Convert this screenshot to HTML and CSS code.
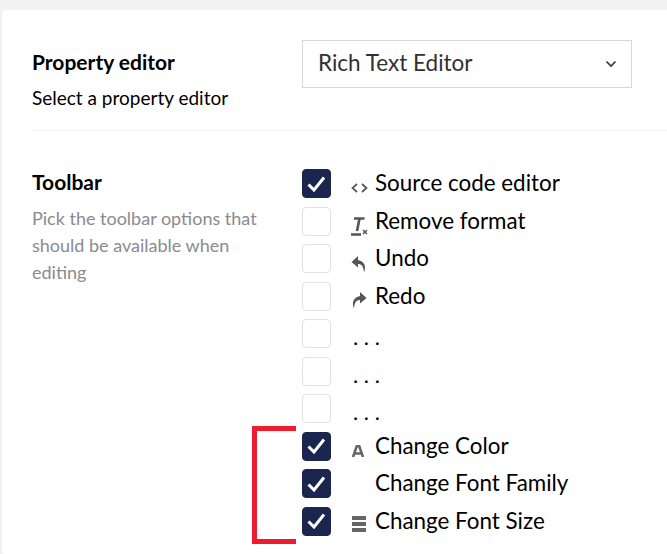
FILE: index.html
```html
<!DOCTYPE html>
<html lang="en">
<head>
  <meta charset="UTF-8">
  <title>Property editor</title>
  <link rel="stylesheet" href="styles.css">
</head>
<body>
  <div class="card">
    <div class="field field-editor">
      <div class="field-label">
        <h3>Property editor</h3>
        <p class="hint-dark">Select a property editor</p>
      </div>
      <div class="select">
        <span class="select-value">Rich Text Editor</span>
        <svg width="12" height="8" viewBox="0 0 12 8"><path d="M1.5 1.5 6 6l4.500-4.500" fill="none" stroke="#333" stroke-width="1.600"/></svg>
      </div>
    </div>

    <div class="field field-toolbar">
      <div class="field-label">
        <h3>Toolbar</h3>
        <p class="hint">Pick the toolbar options that should be available when editing</p>
      </div>
      <ul class="options">
        <li>
          <span class="box checked"><svg width="19" height="16" viewBox="0 0 19 16"><path d="M1.500 8.500 7 14 17 1.500" fill="none" stroke="#fff" stroke-width="3"/></svg></span>
          <span class="icon lifted"><svg width="17" height="12" viewBox="0 0 17 12"><path d="M6 2 1.500 6 6 10M11 2l4.500 4L11 10" fill="none" stroke="#555" stroke-width="1.700"/></svg></span>
          <span class="name">Source code editor</span>
        </li>
        <li>
          <span class="box"></span>
          <span class="icon"><svg width="18" height="19" viewBox="0 0 18 19"><path d="M3 1.500h10.500M8.500 1.500 6 14M0 17.500h10" fill="none" stroke="#555" stroke-width="2.600"/><path d="m12 13 4 4m0-4-4 4" stroke="#555" stroke-width="1.500"/></svg></span>
          <span class="name">Remove format</span>
        </li>
        <li>
          <span class="box"></span>
          <span class="icon"><svg width="16" height="18" viewBox="0 0 16 18"><path d="M7 1 0.500 7 7 12.500V9c3.500 0 5.500 2 6 8.500 2.500-6 .5-11-6-12.500z" fill="#555"/></svg></span>
          <span class="name">Undo</span>
        </li>
        <li>
          <span class="box"></span>
          <span class="icon lifted-sm"><svg width="16" height="18" viewBox="0 0 16 18"><path d="M9 1 15.500 7 9 12.500V9c-3.500 0-5.500 2-6 8.500-2.500-6-.5-11 6-12.500z" fill="#555"/></svg></span>
          <span class="name">Redo</span>
        </li>
        <li><span class="box"></span><span class="dots">. . .</span></li>
        <li><span class="box"></span><span class="dots">. . .</span></li>
        <li><span class="box"></span><span class="dots">. . .</span></li>
        <li>
          <span class="box checked"><svg width="19" height="16" viewBox="0 0 19 16"><path d="M1.500 8.500 7 14 17 1.500" fill="none" stroke="#fff" stroke-width="3"/></svg></span>
          <span class="icon lifted inset"><svg width="12" height="12" viewBox="0 0 12 12"><path d="M1 12 4.800 1h2.400L11 12M2.500 8.500h7" fill="none" stroke="#666" stroke-width="2.600"/></svg></span>
          <span class="name">Change Color</span>
        </li>
        <li>
          <span class="box checked"><svg width="19" height="16" viewBox="0 0 19 16"><path d="M1.500 8.500 7 14 17 1.500" fill="none" stroke="#fff" stroke-width="3"/></svg></span>
          <span class="icon"></span>
          <span class="name">Change Font Family</span>
        </li>
        <li>
          <span class="box checked"><svg width="19" height="16" viewBox="0 0 19 16"><path d="M1.500 8.500 7 14 17 1.500" fill="none" stroke="#fff" stroke-width="3"/></svg></span>
          <span class="icon lifted inset"><svg width="14" height="16" viewBox="0 0 14 16"><path d="M0 0h14v4H0zM0 6h14v4H0zM0 12h14v4H0z" fill="#666"/></svg></span>
          <span class="name">Change Font Size</span>
        </li>
      </ul>
    </div>
    <div class="bracket"></div>
  </div>
</body>
</html>
```

FILE: styles.css
```css
html, body {
  height: 100%;
}

body {
  margin: 0;
  padding: 10px 0 0 2px;
  box-sizing: border-box;
  overflow: hidden;
  font-family: 'Lato', sans-serif;
  background-color: #f3f1f1;
  color: #000;
}

.card {
  position: relative;
  box-sizing: border-box;
  height: 100%;
  background-color: #fff;
  border-radius: 3px 0 0 3px;
  padding: 30px 0 0 30px;
}

.field {
  display: flex;
}

.field-label {
  width: 270px;
  flex: none;
}

.field-editor {
  height: 90px;
  border-bottom: 1px solid #f3f1f1;
}

.field-toolbar {
  padding-top: 38px;
}

h3 {
  margin: 0;
  font-size: 21px;
  line-height: 26px;
  font-weight: 700;
}

.field-editor h3 {
  margin-top: 9px;
}

.hint-dark {
  margin: 9px 0 0;
  font-size: 19px;
  line-height: 27px;
}

.hint {
  margin: 10px 0 0;
  width: 245px;
  font-size: 18px;
  line-height: 27px;
  color: #8a8a92;
}

.select {
  box-sizing: border-box;
  display: flex;
  justify-content: space-between;
  align-items: center;
  width: 330px;
  height: 48px;
  padding: 0 14px 0 15px;
  border: 1px solid #d8d7d9;
  font-size: 22.500px;
  color: #303033;
}

.select-value {
  padding-bottom: 4px;
}

.options {
  list-style: none;
  margin: 0;
  padding: 0;
}

.options li {
  display: flex;
  align-items: flex-start;
  height: 37.550px;
}

.box {
  box-sizing: border-box;
  display: flex;
  align-items: center;
  justify-content: center;
  width: 29px;
  height: 29px;
  border: 1px solid #e2e1e3;
  border-radius: 4px;
}

.box.checked {
  background-color: #1b264f;
  border-color: #1b264f;
}

.icon {
  display: flex;
  justify-content: flex-start;
  align-items: flex-end;
  width: 44px;
  height: 29px;
  padding-left: 20px;
  box-sizing: border-box;
}

.icon.lifted {
  padding-bottom: 4px;
}

.icon.lifted-sm {
  padding-bottom: 2px;
}

.icon.inset {
  padding-left: 21px;
}

.name {
  font-size: 22.400px;
  line-height: 28px;
}

.dots {
  margin: 3px 0 0 22px;
  font-size: 22px;
  line-height: 30px;
}

.bracket {
  position: absolute;
  left: 250px;
  top: 416px;
  width: 39px;
  height: 108px;
  border: 5px solid #ee1c2e;
  border-right: none;
}
```
